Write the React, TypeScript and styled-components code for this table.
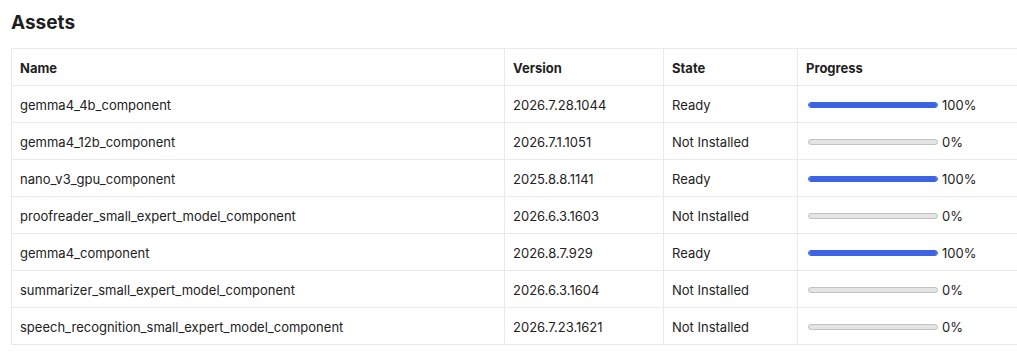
import React from "react";
import styled, { createGlobalStyle } from "styled-components";

const Global = createGlobalStyle`
  html, body { margin: 0; padding: 0; background: #ffffff; overflow: hidden; }
  body { font-family: Inter, "Noto Sans", "Liberation Sans", sans-serif; color: #1f1f1f; }
`;

const Page = styled.div`
  padding: 12px 0 0 11px;
`;

const Title = styled.h2`
  margin: 0 0 14px 0;
  font-size: 19px;
  line-height: 22px;
  font-weight: 700;
  color: #1f1f1f;
`;

const Table = styled.table`
  border-collapse: collapse;
  width: 1100px;
  table-layout: fixed;
  font-size: 13px;
`;

const HeadCell = styled.th<{ $w: number }>`
  box-sizing: border-box;
  width: ${(p) => p.$w}px;
  text-align: left;
  font-weight: 700;
  padding: 11px 8px 9px;
  line-height: 16px;
  border: 1px solid #e9e9e9;
  color: #1f1f1f;
`;

const Cell = styled.td`
  box-sizing: border-box;
  padding: 11px 8px 9px;
  line-height: 16px;
  border: 1px solid #e9e9e9;
  color: #222;
  white-space: nowrap;
`;

const ProgressWrap = styled.div`
  display: flex;
  align-items: center;
  gap: 4px;
`;

const Track = styled.div<{ $empty: boolean }>`
  margin-left: 2px;
  width: 130px;
  height: 6px;
  border-radius: 3px;
  box-sizing: border-box;
  background: ${(p) => (p.$empty ? "#e4e4e4" : "#3b63e3")};
  border: 1px solid ${(p) => (p.$empty ? "#c2c2c2" : "#3b63e3")};
  overflow: hidden;
`;

const Fill = styled.div`
  height: 100%;
  background: #3b63e3;
`;

const rows = [
  ["gemma4_4b_component", "2026.7.28.1044", "Ready", 100],
  ["gemma4_12b_component", "2026.7.1.1051", "Not Installed", 0],
  ["nano_v3_gpu_component", "2025.8.8.1141", "Ready", 100],
  ["proofreader_small_expert_model_component", "2026.6.3.1603", "Not Installed", 0],
  ["gemma4_component", "2026.8.7.929", "Ready", 100],
  ["summarizer_small_expert_model_component", "2026.6.3.1604", "Not Installed", 0],
  ["speech_recognition_small_expert_model_component", "2026.7.23.1621", "Not Installed", 0],
] as const;

export default function App() {
  return (
    <Page>
      <Global />
      <Title>Assets</Title>
      <Table>
        <thead>
          <tr>
            <HeadCell $w={493}>Name</HeadCell>
            <HeadCell $w={159}>Version</HeadCell>
            <HeadCell $w={134}>State</HeadCell>
            <HeadCell $w={314}>Progress</HeadCell>
          </tr>
        </thead>
        <tbody>
          {rows.map(([name, ver, state, pct]) => (
            <tr key={name}>
              <Cell>{name}</Cell>
              <Cell>{ver}</Cell>
              <Cell>{state}</Cell>
              <Cell>
                <ProgressWrap>
                  <Track $empty={pct === 0}>
                    {pct > 0 && <Fill style={{ width: `${pct}%` }} />}
                  </Track>
                  <span>{pct}%</span>
                </ProgressWrap>
              </Cell>
            </tr>
          ))}
        </tbody>
      </Table>
    </Page>
  );
}
